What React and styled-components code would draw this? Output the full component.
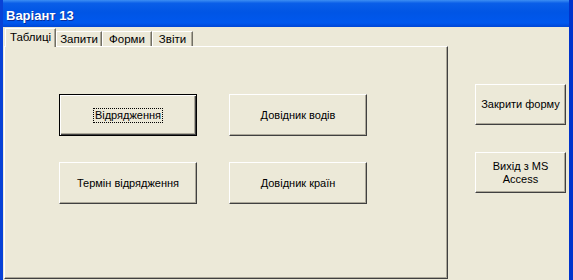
import React from 'react'
import styled, { createGlobalStyle } from 'styled-components'

const GlobalStyle = createGlobalStyle`
    html, body {
        margin: 0;
        padding: 0;
        background: #ECE9D8;
    }
    * {
        box-sizing: border-box;
    }
`

const Window = styled.div`
    display: flex;
    flex-direction: column;
    width: 573px;
    height: 280px;
    overflow: hidden;
    background-color: #ECE9D8;
    border-left: 3px solid #0842D6;
    border-right: 4px solid #0033CC;
    font-family: "Liberation Sans", Arial, sans-serif;
    font-size: 11px;
    color: #000;
`

const TitleBar = styled.div`
    display: flex;
    align-items: center;
    height: 27px;
    margin: 0 -4px 0 -3px;
    padding-left: 6px;
    padding-top: 3px;
    background: linear-gradient(to bottom, #3C8EF3 0%, #0A5EE8 12%, #0055E5 45%, #0058EE 85%, #0046D5 100%);
    color: #fff;
    font-size: 13px;
    font-weight: bold;
    text-shadow: 1px 1px 0 #0A2E9B;
`

const Body = styled.div`
    display: flex;
    flex: 1;
    padding-left: 1px;
`

const LeftPane = styled.div`
    display: flex;
    flex-direction: column;
    width: 444px;
    padding-top: 1px;
    padding-bottom: 1px;
`

const TabRow = styled.div`
    display: flex;
    align-items: flex-end;
    height: 18px;
    padding-left: 1px;
    position: relative;
    z-index: 1;
`

const Tab = styled.div`
    display: flex;
    align-items: center;
    justify-content: center;
    width: ${({ $w }) => $w}px;
    height: ${({ $active }) => ($active ? '19px' : '15px')};
    margin-bottom: ${({ $active }) => ($active ? '-1px' : '0')};
    padding-bottom: ${({ $active }) => ($active ? '2px' : '0')};
    background-color: #ECE9D8;
    border-top: 1px solid #fff;
    border-left: 1px solid #fff;
    border-right: 1px solid #716F64;
    box-shadow: inset -1px 0 #ACA899;
    font-size: 11.5px;
    white-space: nowrap;
`

const Panel = styled.div`
    flex: 1;
    display: grid;
    grid-template-columns: 138px 138px;
    grid-auto-rows: 42px;
    column-gap: 32px;
    row-gap: 26px;
    align-content: start;
    padding: 47px 0 0 54px;
    border-top: 1px solid #fff;
    border-left: 1px solid #fff;
    border-right: 1px solid #404040;
    border-bottom: 1px solid #404040;
    box-shadow: inset -1px -1px #ACA899;
`

const Button = styled.button`
    display: flex;
    align-items: center;
    justify-content: center;
    width: ${({ $w }) => $w || '138px'};
    height: ${({ $h }) => $h || '42px'};
    padding: 0 4px;
    background-color: #ECE9D8;
    font-family: "Liberation Sans", Arial, sans-serif;
    font-size: 11px;
    line-height: 13px;
    color: #000;
    text-align: center;
    border: 1px solid;
    border-color: ${({ $default }) => ($default ? '#000' : '#fff #404040 #404040 #fff')};
    box-shadow: ${({ $default }) =>
        $default
            ? 'inset 1px 1px #fff, inset -1px -1px #404040, inset -2px -2px #ACA899'
            : 'inset -1px -1px #ACA899'};
    cursor: default;
`

const FocusLabel = styled.span`
    padding: 0 1px;
    outline: 1px dotted #000;
`

const RightPane = styled.div`
    display: flex;
    flex-direction: column;
    gap: 27px;
    padding: 57px 0 0 27px;
`

const tabs = [
    { label: 'Таблиці', w: 51, active: true },
    { label: 'Запити', w: 46 },
    { label: 'Форми', w: 50 },
    { label: 'Звіти', w: 41 },
]

const App = () => {
    return (
        <>
            <GlobalStyle />
            <Window>
                <TitleBar>Варіант 13</TitleBar>
                <Body>
                    <LeftPane>
                        <TabRow>
                            {tabs.map((t) => (
                                <Tab key={t.label} $w={t.w} $active={t.active}>
                                    {t.label}
                                </Tab>
                            ))}
                        </TabRow>
                        <Panel>
                            <Button $default>
                                <FocusLabel>Відрядження</FocusLabel>
                            </Button>
                            <Button>Довідник водів</Button>
                            <Button>Термін відрядження</Button>
                            <Button>Довідник країн</Button>
                        </Panel>
                    </LeftPane>
                    <RightPane>
                        <Button $w="91px" $h="41px">Закрити форму</Button>
                        <Button $w="91px" $h="41px">Вихід з MS Access</Button>
                    </RightPane>
                </Body>
            </Window>
        </>
    )
}

export default App
